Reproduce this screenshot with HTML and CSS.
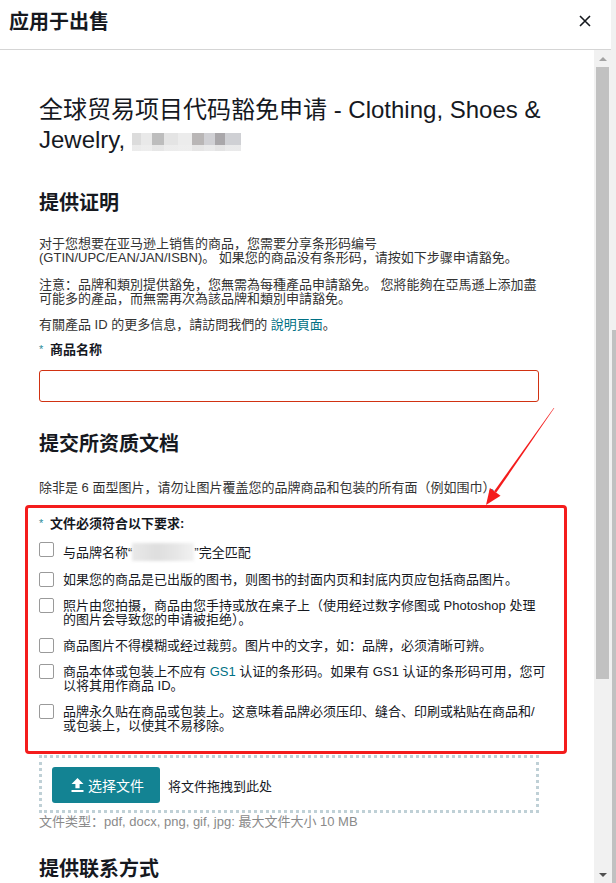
FILE: index.html
```html
<!doctype html>
<html>
<head>
<meta charset="utf-8">
<meta name="viewport" content="width=device-width,minimum-scale=1">
<link rel="stylesheet" href="styles.css">
</head>
<body>
<div class="page">
  <div class="modal">
    <div class="modal-head">
      <h3 class="modal-title">应用于出售</h3>
      <span class="close">
        <svg width="12" height="12" viewBox="0 0 12 12"><path d="M1 1 L11 11 M11 1 L1 11" stroke="#16191f" stroke-width="1.6" fill="none"/></svg>
      </span>
    </div>

    <div class="modal-body">
      <div class="content">
        <h1 class="form-title">全球贸易项目代码豁免申请 - Clothing, Shoes &amp; Jewelry, <span class="blur blur-title"></span></h1>

        <h2 class="sec sec-first">提供证明</h2>
        <p class="txt p1">对于您想要在亚马逊上销售的商品，您需要分享条形码编号 (GTIN/UPC/EAN/JAN/ISBN)。 如果您的商品没有条形码，请按如下步骤申请豁免。</p>
        <p class="txt p2">注意：品牌和類別提供豁免，您無需為每種產品申請豁免。 您將能夠在亞馬遜上添加盡可能多的產品，而無需再次為該品牌和類別申請豁免。</p>
        <p class="txt p3">有關產品 ID 的更多信息，請訪問我們的 <a href="#" class="link">說明頁面</a>。</p>

        <div class="label label-name"><span class="req">*</span>商品名称</div>
        <div class="input"></div>

        <h2 class="sec sec-docs">提交所资质文档</h2>
        <p class="txt p4">除非是 6 面型图片，请勿让图片覆盖您的品牌商品和包装的所有面（例如围巾）。</p>

        <div class="mark-box">
          <div class="label"><span class="req">*</span>文件必须符合以下要求:</div>
          <ul class="checks">
            <li><span class="box"></span><span>与品牌名称“<span class="blur blur-brand"></span>”完全匹配</span></li>
            <li><span class="box"></span><span>如果您的商品是已出版的图书，则图书的封面内页和封底内页应包括商品图片。</span></li>
            <li><span class="box"></span><span>照片由您拍摄，商品由您手持或放在桌子上（使用经过数字修图或 Photoshop 处理的图片会导致您的申请被拒绝）。</span></li>
            <li><span class="box"></span><span>商品图片不得模糊或经过裁剪。图片中的文字，如：品牌，必须清晰可辨。</span></li>
            <li><span class="box"></span><span>商品本体或包装上不应有 <a href="#" class="link">GS1</a> 认证的条形码。如果有 GS1 认证的条形码可用，您可以将其用作商品 ID。</span></li>
            <li><span class="box"></span><span>品牌永久贴在商品或包装上。这意味着品牌必须压印、缝合、印刷或粘贴在商品和/或包装上，以使其不易移除。</span></li>
          </ul>
        </div>

        <div class="upload">
          <button class="btn-file">
            <svg width="13" height="14" viewBox="0 0 13 14"><path d="M6.5 0 L12.5 6 H8.6 V10.3 H4.4 V6 H0.5 Z" fill="#fff"/><rect x="0.5" y="12" width="12" height="2" fill="#fff"/></svg>
            选择文件
          </button>
          <span class="drop-hint">将文件拖拽到此处</span>
        </div>
        <div class="file-types">文件类型：pdf, docx, png, gif, jpg: 最大文件大小 10 MB</div>

        <h2 class="sec sec-contact">提供联系方式</h2>
      </div>

      <div class="scrollbar">
        <span class="sb-btn"><span class="tri-up"></span></span>
        <span class="sb-thumb"></span>
        <span class="sb-track"></span>
        <span class="sb-btn"><span class="tri-down"></span></span>
      </div>
    </div>
  </div>
  <div class="page-scroll"><span class="page-thumb"></span></div>
</div>

<!-- annotation arrow -->
<svg class="annot-arrow" width="616" height="883" viewBox="0 0 616 883">
  <polygon points="554.3,408.1 553.7,407.9 494.1,491.2 496.3,492.6" fill="#f41c1c"/>
  <polygon points="486,505 500.5,495.7 489.9,488.1" fill="#f41c1c"/>
</svg>
</body>
</html>
```

FILE: styles.css
```css
html, body {
  margin: 0;
  padding: 0;
}
body {
  width: 616px;
  height: 883px;
  overflow: hidden;
  background: #fff;
  font-family: "Liberation Sans", "Noto Sans CJK SC", sans-serif;
  color: #333;
}
.page {
  display: flex;
  height: 883px;
}
.modal {
  width: 611px;
  display: flex;
  flex-direction: column;
  background: #fff;
}
.modal-head {
  height: 50px;
  border-bottom: 1px solid #d5d5d5;
  display: flex;
  justify-content: space-between;
  align-items: flex-start;
  padding: 8px 20px 0 9px;
  box-sizing: border-box;
  flex: none;
}
.modal-title {
  margin: 0;
  font-size: 20px;
  line-height: 28px;
  font-weight: bold;
  color: #16191f;
}
.close {
  display: block;
  margin-top: 7px;
  height: 12px;
}
.close svg { display: block; }

.modal-body {
  flex: 1;
  display: flex;
  overflow: hidden;
}
.content {
  flex: 1;
  padding-left: 39px;
  overflow: hidden;
}
.content > * {
  width: 500px;
}

/* titulos */
.content > .form-title {
  width: 525px;
  margin: 45px 0 0;
  font-size: 24px;
  line-height: 30px;
  font-weight: normal;
  color: #16191f;
}
.sec {
  margin: 0;
  font-size: 20px;
  line-height: 24px;
  font-weight: bold;
  color: #16191f;
}
.sec-first { margin-top: 36px; }
.sec-docs { margin-top: 30px; }
.sec-contact { margin-top: 28px; }

.txt {
  margin: 0;
  font-size: 13px;
  line-height: 14px;
  color: #333;
}
.p1 { margin-top: 22px; }
.p2 { margin-top: 13px; }
.p3 { margin-top: 12px; }
.p4 { margin-top: 25px; }

.link {
  color: #007185;
  text-decoration: none;
}

.label {
  font-size: 13px;
  line-height: 14px;
  font-weight: bold;
  color: #16191f;
}
.label-name { margin-top: 10px; }
.req {
  color: #2b8b98;
  font-weight: normal;
  font-size: 11px;
  display: inline-block;
  width: 11px;
  vertical-align: 1px;
}
.input {
  margin-top: 13px;
  height: 32px;
  box-sizing: border-box;
  border: 1px solid #d13212;
  border-radius: 3px;
}

/* pixelado */
.blur {
  display: inline-block;
}
.blur-title {
  width: 109px;
  height: 18px;
  vertical-align: -3px;
  background:
    linear-gradient(to bottom, rgba(255,255,255,0) 0 68%, rgba(238,238,238,0.85) 68% 100%),
    linear-gradient(to right, #dcdcdc 0 8%, #e9e9e9 8% 18%, #bdbdbd 18% 29%, #e4e4e4 29% 42%, #ececec 42% 55%, #b9b6b6 55% 66%, #d0d0d4 66% 76%, #a9a7aa 76% 85%, #cfd0d4 85% 100%);
}
.blur-brand {
  width: 62px;
  height: 18px;
  vertical-align: -4px;
  background: linear-gradient(to right, #e9e9e9, #dedede 40%, #e6e6e6 70%, #f2f2f2);
  filter: blur(1.5px);
}

/* caixa vermelha */
.content > .mark-box {
  margin: 10px 0 0 -14px;
  width: 542px;
  box-sizing: border-box;
  border: 3px solid #f41c1c;
  border-radius: 4px;
  padding: 8px 18px 18px 11px;
}
.checks {
  list-style: none;
  margin: 0;
  padding: 0;
}
.checks li {
  display: flex;
  gap: 9px;
  margin-top: 12px;
  font-size: 13px;
  line-height: 14px;
  color: #16191f;
}
.box {
  flex: none;
  width: 15px;
  height: 15px;
  box-sizing: border-box;
  border: 1px solid #9a9a9a;
  border-radius: 2px;
  margin-top: -1px;
}

/* upload */
.upload {
  margin-top: 1px;
  box-sizing: border-box;
  border: 3px dotted #bfd0d6;
  padding: 9px 10px 7px;
  display: flex;
  align-items: center;
  gap: 8px;
}
.btn-file {
  height: 36px;
  width: 108px;
  border: none;
  border-radius: 3px;
  background: #138393;
  color: #fff;
  font-family: inherit;
  font-size: 14px;
  display: flex;
  align-items: center;
  gap: 4px;
  padding: 0 0 0 19px;
}
.drop-hint {
  font-size: 13px;
  color: #16191f;
}
.file-types {
  margin-top: 2px;
  font-size: 13px;
  line-height: 14px;
  color: #8a8a8a;
}

/* barras de rolagem */
.scrollbar {
  width: 17px;
  flex: none;
  background: #f1f1f1;
  display: flex;
  flex-direction: column;
}
.sb-btn {
  height: 17px;
  flex: none;
  display: flex;
  align-items: center;
  justify-content: center;
}
.tri-up, .tri-down {
  width: 0;
  height: 0;
  border-left: 4px solid transparent;
  border-right: 4px solid transparent;
}
.tri-up { border-bottom: 4px solid #a3a3a3; }
.tri-down { border-top: 4px solid #505050; }
.sb-thumb {
  height: 612px;
  margin: 0 2px;
  background: #c1c1c1;
  flex: none;
}
.sb-track { flex: 1; }

.page-scroll {
  width: 5px;
  background: #f1f1f1;
  display: flex;
  flex-direction: column;
  align-items: flex-end;
}
.page-thumb {
  width: 4px;
  margin-top: 330px;
  flex: 1;
  background: #c1c1c1;
}

.annot-arrow {
  position: absolute;
  left: 0;
  top: 0;
  pointer-events: none;
}
```
